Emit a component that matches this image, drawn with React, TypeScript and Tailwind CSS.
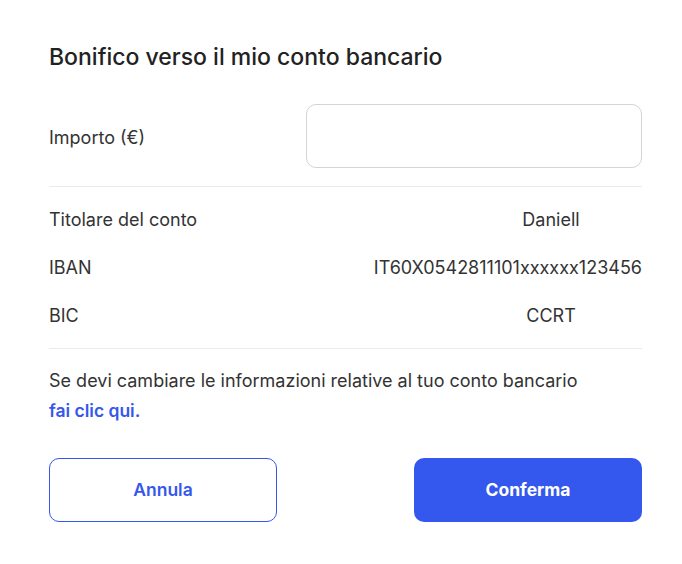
const rows = [
  { label: "Titolare del conto", value: "Daniell", align: "center" },
  { label: "IBAN", value: "IT60X0542811101xxxxxx123456", align: "right" },
  { label: "BIC", value: "CCRT", align: "center" },
];

export default function App() {
  return (
    <div className="min-h-[564px] w-[682px] bg-white font-['Inter',sans-serif] text-[#333]">
      <div className="ml-[49px] w-[593px] pt-[43px]">
        <div className="text-[23px] font-medium leading-[28px] text-[#222]">
          Bonifico verso il mio conto bancario
        </div>

        <div className="mt-[33px] flex items-center justify-between">
          <label className="pt-[3px] text-[18px] leading-6">Importo (€)</label>
          <input
            type="text"
            className="h-[64px] w-[336px] rounded-[10px] border border-[#d4d4d4] px-4 text-[18px] outline-none"
          />
        </div>

        <div className="mt-[18px] h-px bg-[#ebebeb]" />

        <div className="mt-[8px]">
          {rows.map((r) => (
            <div key={r.label} className="flex h-[48px] items-center justify-between text-[18px]">
              <span>{r.label}</span>
              {r.align === "center" ? (
                <span className="w-[182px] text-center">{r.value}</span>
              ) : (
                <span className="text-right">{r.value}</span>
              )}
            </div>
          ))}
        </div>

        <div className="mt-[9px] h-px bg-[#ebebeb]" />

        <div className="mt-[17px] text-[18px] leading-[30px]">
          Se devi cambiare le informazioni relative al tuo conto bancario
        </div>
        <a href="#" className="block text-[17.5px] font-semibold leading-[30px] text-[#3457ed]">
          fai clic qui.
        </a>

        <div className="mt-[32px] flex justify-between">
          <button className="h-[64px] w-[228px] rounded-[10px] border border-[#3457ed] bg-white text-[17.5px] font-semibold text-[#3457ed]">
            Annula
          </button>
          <button className="h-[64px] w-[228px] rounded-[10px] bg-[#3457ed] text-[17.5px] font-bold text-white">
            Conferma
          </button>
        </div>
      </div>
    </div>
  );
}
